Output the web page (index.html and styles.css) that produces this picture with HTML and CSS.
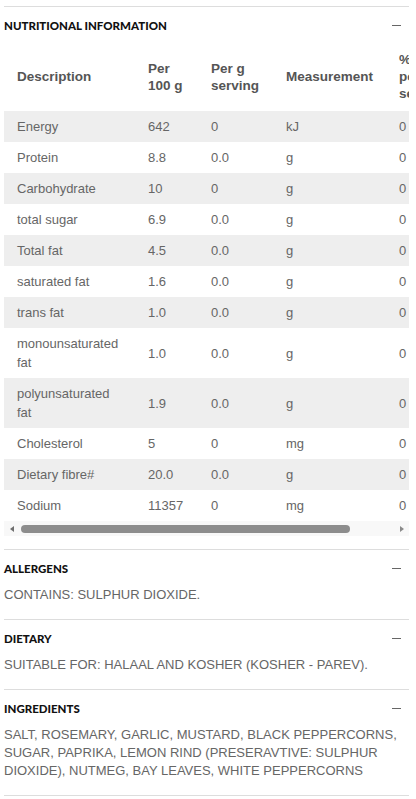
FILE: index.html
```html
<!DOCTYPE html>
<html lang="en">
<head>
  <meta charset="UTF-8" />
  <meta name="viewport" content="width=device-width, initial-scale=1.0" />
  <title>Product information</title>
  <link rel="stylesheet" href="styles.css">
</head>
<body>
  <div class="info">
    <section class="panel">
      <div class="panel-head">
        <h2>Nutritional information</h2>
        <span class="toggle"></span>
      </div>
      <div class="table-wrap">
        <table class="nutrition">
          <colgroup>
            <col class="c-desc">
            <col class="c-100">
            <col class="c-serv">
            <col class="c-unit">
            <col class="c-pct">
          </colgroup>
          <thead>
            <tr>
              <th>Description</th>
              <th>Per 100 g</th>
              <th>Per g serving</th>
              <th>Measurement</th>
              <th>% RDI per serving</th>
            </tr>
          </thead>
          <tbody>
            <tr><td>Energy</td><td>642</td><td>0</td><td>kJ</td><td>0</td></tr>
            <tr><td>Protein</td><td>8.8</td><td>0.0</td><td>g</td><td>0</td></tr>
            <tr><td>Carbohydrate</td><td>10</td><td>0</td><td>g</td><td>0</td></tr>
            <tr><td>total sugar</td><td>6.9</td><td>0.0</td><td>g</td><td>0</td></tr>
            <tr><td>Total fat</td><td>4.5</td><td>0.0</td><td>g</td><td>0</td></tr>
            <tr><td>saturated fat</td><td>1.6</td><td>0.0</td><td>g</td><td>0</td></tr>
            <tr><td>trans fat</td><td>1.0</td><td>0.0</td><td>g</td><td>0</td></tr>
            <tr><td>monounsaturated fat</td><td>1.0</td><td>0.0</td><td>g</td><td>0</td></tr>
            <tr><td>polyunsaturated fat</td><td>1.9</td><td>0.0</td><td>g</td><td>0</td></tr>
            <tr><td>Cholesterol</td><td>5</td><td>0</td><td>mg</td><td>0</td></tr>
            <tr><td>Dietary fibre#</td><td>20.0</td><td>0.0</td><td>g</td><td>0</td></tr>
            <tr><td>Sodium</td><td>11357</td><td>0</td><td>mg</td><td>0</td></tr>
          </tbody>
        </table>
      </div>
      <div class="scrollbar">
        <span class="arrow arrow-left"></span>
        <span class="track"><span class="thumb"></span></span>
        <span class="arrow arrow-right"></span>
      </div>
    </section>

    <section class="panel">
      <div class="panel-head">
        <h2>Allergens</h2>
        <span class="toggle"></span>
      </div>
      <p>CONTAINS: SULPHUR DIOXIDE.</p>
    </section>

    <section class="panel">
      <div class="panel-head">
        <h2>Dietary</h2>
        <span class="toggle"></span>
      </div>
      <p>SUITABLE FOR: HALAAL AND KOSHER (KOSHER - PAREV).</p>
    </section>

    <section class="panel">
      <div class="panel-head">
        <h2>Ingredients</h2>
        <span class="toggle"></span>
      </div>
      <p>SALT, ROSEMARY, GARLIC, MUSTARD, BLACK PEPPERCORNS, SUGAR, PAPRIKA, LEMON RIND (PRESERAVTIVE: SULPHUR DIOXIDE), NUTMEG, BAY LEAVES, WHITE PEPPERCORNS</p>
    </section>
  </div>
</body>
</html>
```

FILE: styles.css
```css
body {
  margin: 0;
  background: #fff;
  font-family: 'Liberation Sans', Arial, sans-serif;
  color: #666;
}

.info {
  padding-top: 6px;
  margin: 0 7px 0 4px;
}

.panel {
  border-top: 1px solid #ddd;
  padding: 9px 0 15px;
}

.panel:first-child {
  padding-bottom: 13px;
}

.panel:last-child {
  border-bottom: 1px solid #ddd;
}

.panel-head {
  display: flex;
  align-items: center;
  justify-content: space-between;
  height: 18px;
  margin-bottom: 9px;
}

.panel-head h2 {
  margin: 0;
  font-family: 'Lato', sans-serif;
  font-weight: 900;
  font-size: 11.5px;
  text-transform: uppercase;
  color: #111;
}

.toggle {
  width: 9px;
  height: 1px;
  background: #666;
  margin-right: 8px;
}

.panel p {
  margin: 0;
  font-size: 13px;
  line-height: 18px;
}

.table-wrap {
  overflow: hidden;
}

.nutrition {
  border-collapse: collapse;
  table-layout: fixed;
  width: 462px;
  font-size: 13px;
}

.c-desc { width: 131px; }
.c-100 { width: 63px; }
.c-serv { width: 75px; }
.c-unit { width: 113px; }
.c-pct { width: 80px; }

.nutrition th {
  text-align: left;
  font-weight: bold;
  font-size: 13.5px;
  line-height: 17px;
  color: #555;
  padding: 8px 13px 9px;
  vertical-align: middle;
}

.nutrition td {
  padding: 6px 13px;
  line-height: 19px;
  vertical-align: middle;
}

.nutrition tbody tr:nth-child(odd) {
  background: #eee;
}

/* horizontal scrollbar under the table */
.scrollbar {
  display: flex;
  align-items: center;
  height: 15px;
  background: #f8f8f8;
}

.arrow {
  width: 15px;
  height: 15px;
  display: flex;
  align-items: center;
  justify-content: center;
}

.arrow::before {
  content: '';
  border-top: 3.5px solid transparent;
  border-bottom: 3.5px solid transparent;
}

.arrow-left::before {
  border-right: 4px solid #6e6e6e;
}

.arrow-right::before {
  border-left: 4px solid #8a8a8a;
}

.track {
  flex: 1;
  display: flex;
  align-items: center;
}

.thumb {
  width: 329px;
  height: 8px;
  margin-left: 2px;
  border-radius: 4px;
  background: #8d8d8d;
}
```
